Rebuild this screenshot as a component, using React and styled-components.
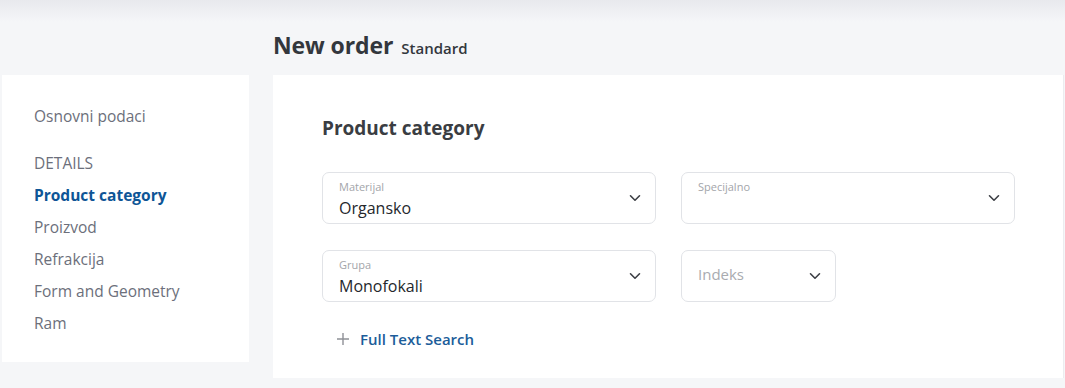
import styled, { createGlobalStyle } from "styled-components";

const GlobalStyle = createGlobalStyle`
  html, body {
    margin: 0;
    padding: 0;
    background: #f5f6f8;
    font-family: "Open Sans", "Noto Sans", sans-serif;
  }
`;

const Page = styled.div`
  display: grid;
  grid-template-columns: 247px 791px;
  grid-template-rows: 75px auto;
  column-gap: 24px;
  padding-left: 2px;
  height: 388px;
  box-sizing: border-box;
  background: linear-gradient(#e8e9ed 0px, #f5f6f8 22px);
`;

const Header = styled.div`
  grid-column: 2;
  grid-row: 1;
  display: flex;
  align-items: baseline;
  gap: 8px;
  padding-top: 29px;
  color: #33373d;
`;

const Title = styled.h1`
  margin: 0;
  font-size: 23px;
  font-weight: 700;
  letter-spacing: -0.1px;
`;

const Subtitle = styled.span`
  font-size: 15px;
  font-weight: 600;
`;

const Sidebar = styled.nav`
  grid-column: 1;
  grid-row: 2;
  align-self: start;
  background: #fff;
  padding: 25px 0 23px 32px;
`;

const NavItem = styled.div`
  font-size: 15.5px;
  line-height: 32px;
  color: ${(p) => (p.$active ? "#0e5596" : "#6c6f7b")};
  font-weight: ${(p) => (p.$active ? 700 : 400)};
  margin-bottom: ${(p) => (p.$spaced ? "15px" : "0")};
`;

const Main = styled.main`
  grid-column: 2;
  grid-row: 2;
  align-self: start;
  background: #fff;
  padding: 39px 49px 24px;
  height: 303px;
  box-sizing: border-box;
  border-right: 1px solid #ececef;
`;

const SectionTitle = styled.h2`
  margin: 0 0 30px;
  font-size: 19px;
  font-weight: 700;
  color: #3a3d42;
  line-height: 28px;
`;

const Fields = styled.div`
  display: grid;
  grid-template-columns: 334px 334px;
  column-gap: 25px;
  row-gap: 26px;
  justify-items: start;
`;

const Select = styled.div`
  box-sizing: border-box;
  width: ${(p) => p.$width || "334px"};
  height: 52px;
  border: 1px solid #e1e3e7;
  border-radius: 7px;
  display: flex;
  align-items: center;
  justify-content: space-between;
  padding: 0 14px 0 16px;
`;

const SelectText = styled.div`
  display: flex;
  flex-direction: column;
  align-self: stretch;
  justify-content: flex-start;
  padding-top: 7px;
`;

const Label = styled.span`
  font-size: 11px;
  line-height: 14px;
  color: #a3a5aa;
`;

const Value = styled.span`
  margin-top: 3px;
  font-size: 16px;
  line-height: 22px;
  font-weight: 500;
  color: #25282c;
`;

const Placeholder = styled.span`
  font-size: 15px;
  line-height: 20px;
  margin-top: -4px;
  color: #a9abb0;
`;

const Chevron = () => (
  <svg width="12" height="8" viewBox="0 0 12 8" fill="none">
    <path d="M1.5 1.8 6 6.2l4.5-4.4" stroke="#3b3e44" strokeWidth="1.6" strokeLinecap="round" strokeLinejoin="round" />
  </svg>
);

const SearchLink = styled.div`
  display: flex;
  align-items: center;
  gap: 11px;
  margin-top: 27px;
  padding-left: 15px;
  font-size: 15px;
  font-weight: 600;
  color: #1c5d9a;
`;

const PlusIcon = () => (
  <svg width="12" height="12" viewBox="0 0 12 12">
    <path d="M6 0v12M0 6h12" stroke="#8f9197" strokeWidth="1.4" />
  </svg>
);

const Field = ({ label, value, width }) => (
  <Select $width={width}>
    {label ? (
      <SelectText>
        <Label>{label}</Label>
        {value && <Value>{value}</Value>}
      </SelectText>
    ) : (
      <Placeholder>{value}</Placeholder>
    )}
    <Chevron />
  </Select>
);

export default function App() {
  return (
    <>
      <GlobalStyle />
      <Page>
        <Header>
          <Title>New order</Title>
          <Subtitle>Standard</Subtitle>
        </Header>
        <Sidebar>
          <NavItem $spaced>Osnovni podaci</NavItem>
          <NavItem>DETAILS</NavItem>
          <NavItem $active>Product category</NavItem>
          <NavItem>Proizvod</NavItem>
          <NavItem>Refrakcija</NavItem>
          <NavItem>Form and Geometry</NavItem>
          <NavItem>Ram</NavItem>
        </Sidebar>
        <Main>
          <SectionTitle>Product category</SectionTitle>
          <Fields>
            <Field label="Materijal" value="Organsko" />
            <Field label="Specijalno" />
            <Field label="Grupa" value="Monofokali" />
            <Field value="Indeks" width="155px" />
          </Fields>
          <SearchLink>
            <PlusIcon />
            Full Text Search
          </SearchLink>
        </Main>
      </Page>
    </>
  );
}
